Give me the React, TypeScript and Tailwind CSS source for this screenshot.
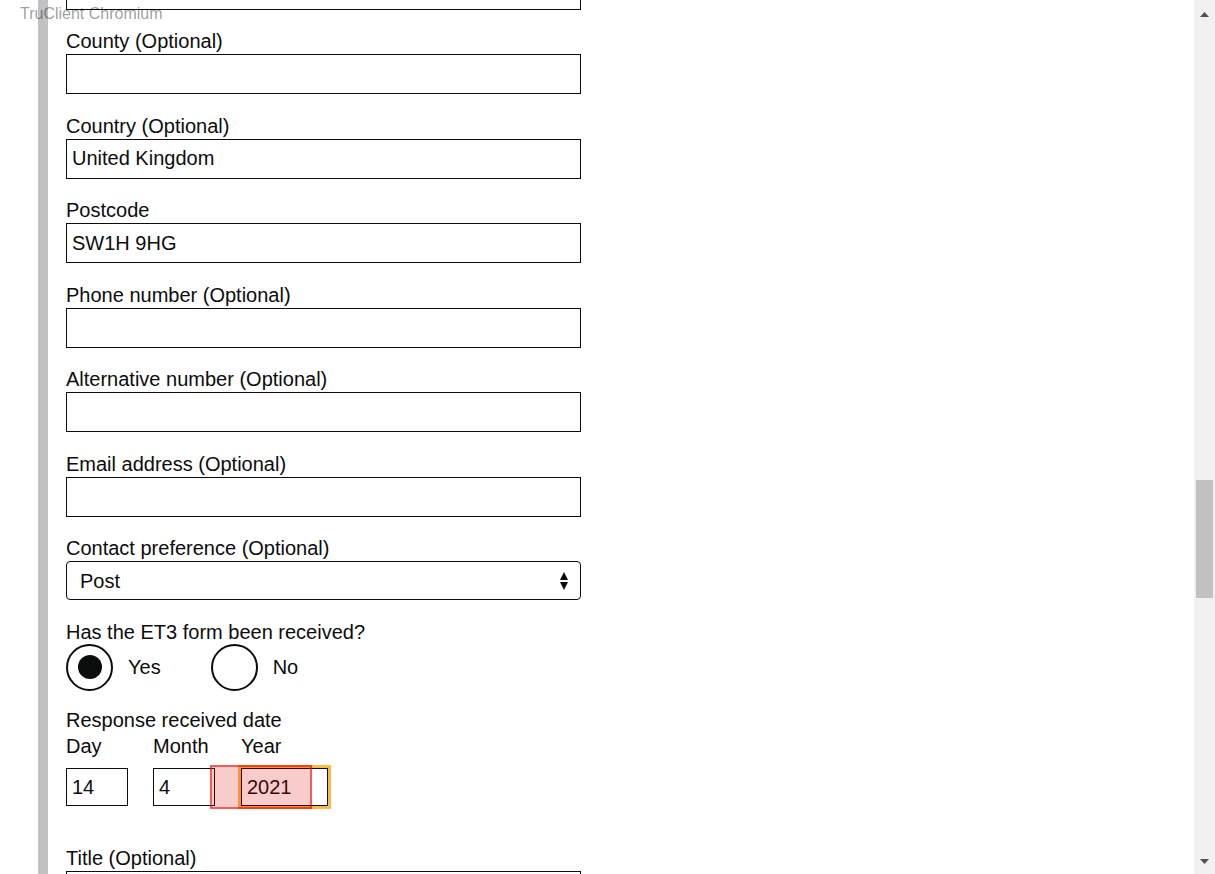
import React from 'react';

interface FieldProps {
  label: string;
  value?: string;
}

function TextField({ label, value = '' }: FieldProps) {
  return (
    <div className="mt-[19.5px]">
      <label className="block text-[20px] leading-[25px]">{label}</label>
      <input
        readOnly
        value={value}
        className="block w-full h-[40px] border border-[#0b0c0c] px-[5px] text-[20px] outline-none"
      />
    </div>
  );
}

function Radio({ label, checked, className = '' }: { label: string; checked?: boolean; className?: string }) {
  return (
    <div className={`flex items-center ${className}`}>
      <div className="w-[47px] h-[47px] rounded-full border-[2.5px] border-[#0b0c0c] flex items-center justify-center">
        {checked && <div className="w-[24px] h-[24px] rounded-full bg-[#0b0c0c]" />}
      </div>
      <span className="ml-[15px] text-[20px] leading-[25px]">{label}</span>
    </div>
  );
}

function DateInput({ label, value, width, className = '', children }: { label: string; value: string; width: string; className?: string; children?: React.ReactNode }) {
  return (
    <div className={className}>
      <div className="mt-[1px] text-[20px] leading-[25px]">{label}</div>
      <div className="relative mt-[9px]">
        <input
          readOnly
          value={value}
          className={`block ${width} h-[38px] border border-[#0b0c0c] px-[5px] pt-[1px] text-[20px] outline-none`}
        />
        {children}
      </div>
    </div>
  );
}

export default function App() {
  return (
    <div className="relative flex h-[874px] overflow-hidden bg-white text-[#0b0c0c] font-['Liberation_Sans',Arial,sans-serif]">
      <span className="absolute left-[20px] top-[4px] text-[16px] leading-[20px] text-[rgba(0,0,0,0.4)]">TruClient Chromium</span>

      <div className="flex-1 flex pl-[38px]">
        <div className="w-[10px] bg-[#bfc1c3]" />
        <div className="ml-[18px] w-[515px] -mt-[30.5px]">
          <input readOnly value="" className="block w-full h-[40px] border border-[#0b0c0c] outline-none" />

          <TextField label="County (Optional)" />
          <TextField label="Country (Optional)" value="United Kingdom" />
          <TextField label="Postcode" value="SW1H 9HG" />
          <TextField label="Phone number (Optional)" />
          <TextField label="Alternative number (Optional)" />
          <TextField label="Email address (Optional)" />

          <div className="mt-[19.5px]">
            <label className="block text-[20px] leading-[25px]">Contact preference (Optional)</label>
            <div className="flex items-center justify-between h-[39px] rounded-[4px] border border-[#0b0c0c] pl-[13px] pr-[12px] text-[20px]">
              <span>Post</span>
              <svg width="8" height="18" viewBox="0 0 8 18">
                <polygon points="0,8 4,0 8,8" fill="#0b0c0c" />
                <polygon points="0,10 8,10 4,18" fill="#0b0c0c" />
              </svg>
            </div>
          </div>

          <div className="mt-[19.5px]">
            <div className="text-[20px] leading-[25px]">Has the ET3 form been received?</div>
            <div className="flex items-center -mt-[1px]">
              <Radio label="Yes" checked />
              <Radio label="No" className="ml-[50px]" />
            </div>
          </div>

          <div className="mt-[17.5px]">
            <div className="text-[20px] leading-[25px]">Response received date</div>
            <div className="flex">
              <DateInput label="Day" value="14" width="w-[62px]" className="mr-[25px]" />
              <DateInput label="Month" value="4" width="w-[62px]" className="mr-[26px]" />
              <DateInput label="Year" value="2021" width="w-[87px]">
                <div className="absolute left-[-3px] top-[-3px] w-[93px] h-[44px] border-[3px] border-[#fdb849]" />
                <div className="absolute left-[-31px] top-[-3px] w-[102px] h-[44px] border-2 border-[rgba(235,0,0,0.55)] bg-[rgba(225,0,0,0.2)]" />
              </DateInput>
            </div>
          </div>

          <div className="mt-[39.5px]">
            <label className="block text-[20px] leading-[25px]">Title (Optional)</label>
            <input readOnly value="" className="block w-full h-[40px] border border-[#0b0c0c] outline-none" />
          </div>
        </div>
      </div>

      <div className="w-[21px] bg-[#f1f1f1] flex flex-col items-center">
        <div className="h-[17px] flex items-end">
          <svg width="9" height="5" viewBox="0 0 9 5">
            <polygon points="0,5 4.5,0 9,5" fill="#505050" />
          </svg>
        </div>
        <div className="mt-[463px] w-[17px] h-[118px] bg-[#c1c1c1]" />
        <div className="flex-1" />
        <div className="h-[15px] flex items-start">
          <svg width="9" height="5" viewBox="0 0 9 5">
            <polygon points="0,0 9,0 4.5,5" fill="#505050" />
          </svg>
        </div>
      </div>
    </div>
  );
}
